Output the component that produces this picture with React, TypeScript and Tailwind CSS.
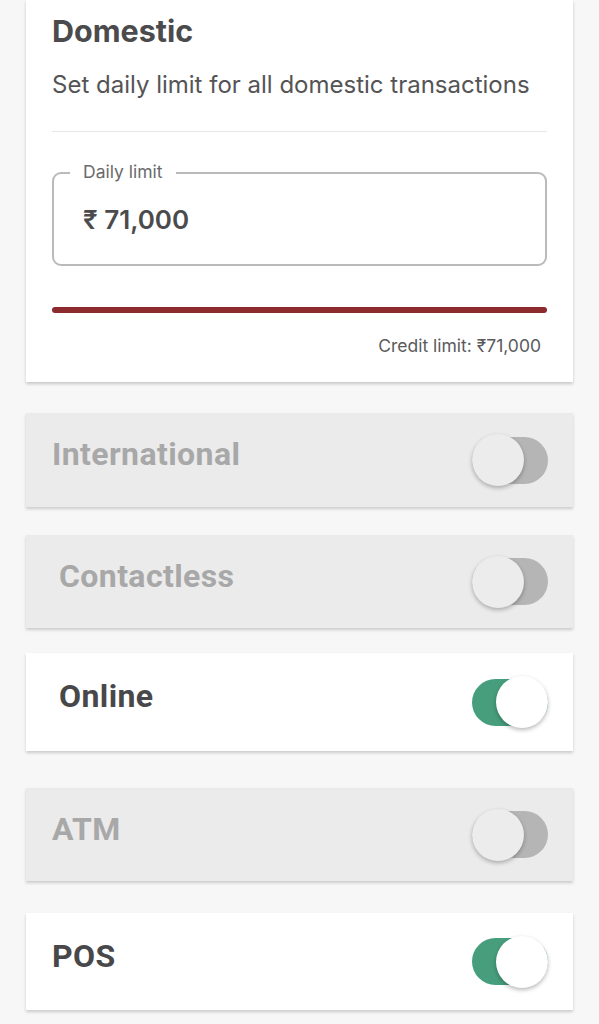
import React from "react";

type Row = { title: string; on: boolean; indent?: boolean; mt: string; h: string };

const rows: Row[] = [
  { title: "International", on: false, mt: "mt-[31px]", h: "h-[94px]" },
  { title: "Contactless", on: false, indent: true, mt: "mt-[28px]", h: "h-[93px]" },
  { title: "Online", on: true, indent: true, mt: "mt-[25px]", h: "h-[98px]" },
  { title: "ATM", on: false, mt: "mt-[37px]", h: "h-[93px]" },
  { title: "POS", on: true, mt: "mt-[32px]", h: "h-[97px]" },
];

function Toggle({ on }: { on: boolean }) {
  return (
    <div
      className={`flex h-[47px] w-[76px] items-center rounded-full ${
        on ? "justify-end bg-[#469e7c]" : "justify-start bg-[#b5b5b5]"
      }`}
    >
      <div
        className={`h-[52px] w-[52px] shrink-0 rounded-full shadow-[0_2px_4px_rgba(0,0,0,0.28)] ${
          on ? "bg-white" : "bg-[#ececec]"
        }`}
      />
    </div>
  );
}

export default function App() {
  return (
    <div className="min-h-[1024px] bg-[#f7f7f7] px-[26px] pb-10" style={{ fontFamily: "Inter, 'Noto Sans', sans-serif" }}>
      <section className="bg-white px-[26px] pt-[12px] pb-[25px] shadow-[0_2px_3px_rgba(0,0,0,0.2)]">
        <h1 className="text-[30.5px] font-bold leading-[37px] text-[#4b4b4d]">Domestic</h1>
        <p className="mt-[20px] text-[24px] leading-[32px] text-[#545456]">
          Set daily limit for all domestic transactions
        </p>
        <div className="mt-[30px] h-px bg-[#e7e7e7]" />
        <div className="relative mt-[40px] flex h-[94px] items-center rounded-[9px] border-2 border-[#bababa] pl-[29px]">
          <span className="absolute left-[16px] top-[-12px] bg-white px-[13px] text-[17.5px] leading-[20px] text-[#6a6a6c]">
            Daily limit
          </span>
          <span className="text-[26px] font-semibold text-[#4b4b4d]">₹ 71,000</span>
        </div>
        <div className="mt-[41px] h-[6px] rounded-full bg-[#8c2a2e]" />
        <p className="mt-[22px] pr-[6px] text-right text-[17.5px] leading-[22px] text-[#5a5a5c]">
          Credit limit: ₹71,000
        </p>
      </section>

      {rows.map((r) => (
        <div
          key={r.title}
          className={`${r.mt} ${r.h} flex items-center justify-between pl-[26px] pr-[25px] shadow-[0_2px_3px_rgba(0,0,0,0.18)] ${
            r.on ? "bg-white" : "bg-[#ebebeb]"
          }`}
        >
          <span
            className={`mb-[12px] text-[32px] font-bold tracking-[0.4px] ${r.indent ? "pl-[7px]" : ""} ${
              r.on ? "text-[#48484a]" : "text-[#a8a8a8]"
            }`}
            style={{ fontFamily: "Roboto, 'Liberation Sans', sans-serif" }}
          >
            {r.title}
          </span>
          <Toggle on={r.on} />
        </div>
      ))}
    </div>
  );
}
